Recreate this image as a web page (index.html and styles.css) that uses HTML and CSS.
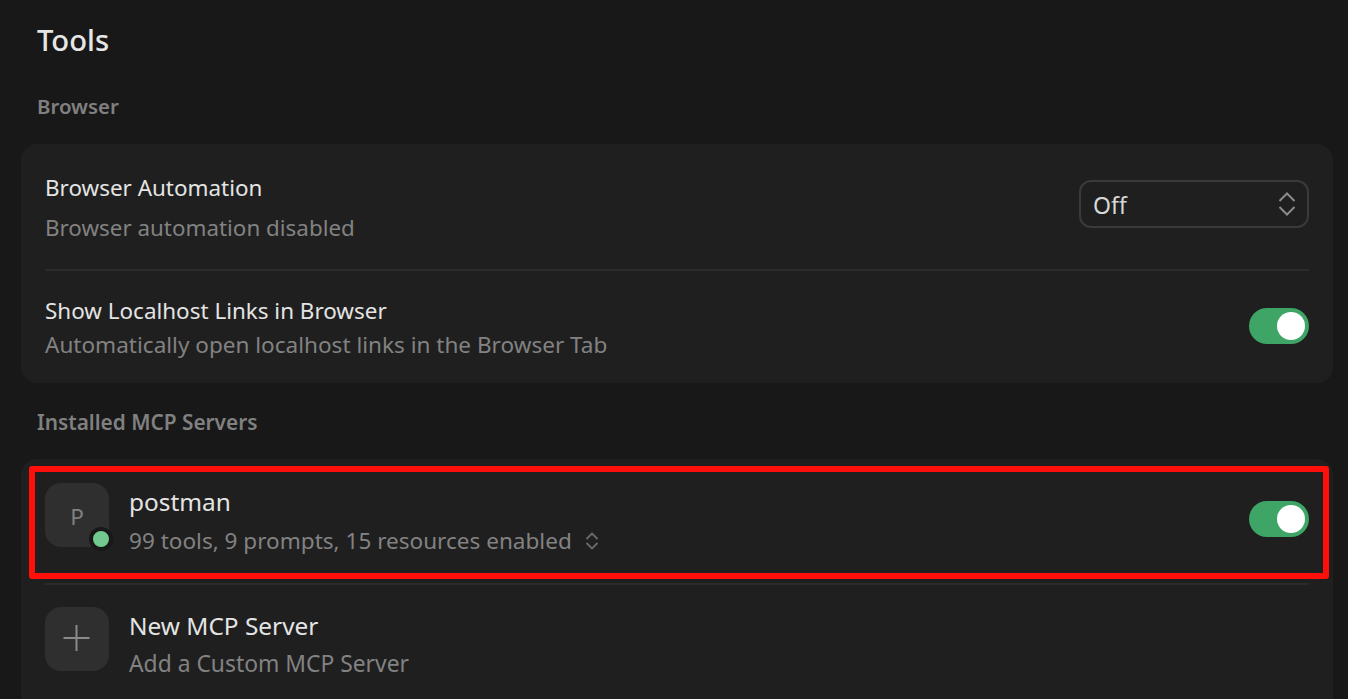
FILE: index.html
```html
<!DOCTYPE html>
<html lang="en">
<head>
<meta charset="utf-8">
<title>Tools</title>
<link rel="stylesheet" href="styles.css">
</head>
<body>
<main class="page">
  <h1 class="title">Tools</h1>
  <h2 class="section section-browser">Browser</h2>
  <section class="card card-browser">
    <div class="row row-auto">
      <div class="text text-shift">
        <div class="name">Browser Automation</div>
        <div class="desc desc-auto">Browser automation disabled</div>
      </div>
      <div class="select">
        <span class="select-value">Off</span>
        <svg class="updown" width="20" height="26" viewBox="0 0 20 26" fill="none"><path d="M2.500 10 10 2.500 17.500 10M2.500 16 10 23.500 17.500 16" stroke="#8a8a8a" stroke-width="2"/></svg>
      </div>
    </div>
    <div class="row row-local">
      <div class="text text-shift">
        <div class="name">Show Localhost Links in Browser</div>
        <div class="desc desc-tight">Automatically open localhost links in the Browser Tab</div>
      </div>
      <div class="toggle toggle-local"><span class="knob"></span></div>
    </div>
  </section>
  <h2 class="section section-mcp">Installed MCP Servers</h2>
  <section class="card card-mcp">
    <div class="row row-server">
      <div class="avatar avatar-server"><span class="initial">P</span><span class="status"></span></div>
      <div class="text">
        <div class="name name-mcp">postman</div>
        <div class="desc desc-server">99 tools, 9 prompts, 15 resources enabled
          <svg width="14" height="18" viewBox="0 0 14 18" fill="none"><path d="M1.500 7 7 1.500 12.500 7M1.500 11 7 16.500 12.500 11" stroke="#6a6a6a" stroke-width="1.800"/></svg>
        </div>
      </div>
      <div class="toggle toggle-server"><span class="knob"></span></div>
      <div class="highlight"></div>
    </div>
    <div class="row row-new">
      <div class="avatar">
        <svg width="28" height="28" viewBox="0 0 28 28" fill="none"><path d="M13.500 0V26M.5 13H26.500" stroke="#8a8a8a" stroke-width="2"/></svg>
      </div>
      <div class="text text-new">
        <div class="name name-mcp">New MCP Server</div>
        <div class="desc desc-new">Add a Custom MCP Server</div>
      </div>
    </div>
  </section>
</main>
</body>
</html>
```
FILE: styles.css
```css
* { box-sizing: border-box; }
html, body { margin: 0; height: 100%; overflow: hidden; }
body {
  background: #181818;
  color: #e4e4e4;
  font-family: "Noto Sans", "Open Sans", sans-serif;
}
.page { padding: 0 15px 0 21px; }
.title {
  margin: 0;
  padding: 20px 0 1px 16px;
  font-size: 29.2px;
  line-height: 40px;
  font-weight: 500;
  color: #e6e6e6;
}
.section {
  margin: 0;
  padding-left: 16px;
  font-size: 20.6px;
  line-height: 28px;
  font-weight: 600;
  color: #808080;
}
.section-browser { padding-top: 31px; height: 83px; font-size: 20.4px; }
.section-mcp { padding-top: 25px; height: 76px; font-size: 20.8px; }
.card {
  background: #1f1f1f;
  border-radius: 16px;
  padding: 0 24px;
}
.card-mcp { height: 260px; }
.row {
  display: flex;
  align-items: center;
  position: relative;
}
.row-auto { height: 127px; border-bottom: 2px solid #2b2b2b; }
.row-local { height: 112px; }
.row-server { height: 126px; border-bottom: 2px solid #2b2b2b; }
.row-new { height: 108px; padding-top: 22px; align-items: flex-start; }
.text { flex: 1; min-width: 0; }
.text-shift { padding-top: 2px; }
.row-server .text, .row-new .text { margin-left: 20px; }
.text-new { padding-top: 3px; }
.name { font-size: 22.45px; line-height: 32px; color: #e4e4e4; }
.name-mcp { font-size: 24.4px; }
.desc { font-size: 22.4px; line-height: 32px; color: #828282; }
.desc-auto { margin-top: 8px; }
.desc-tight { margin-top: 2px; font-size: 22.55px; }
.desc-server { margin-top: 7px; display: flex; align-items: center; gap: 13px; font-size: 22.55px; }
.desc-new { margin-top: 6px; font-size: 22.85px; }
.select {
  width: 230px;
  height: 48px;
  margin-bottom: 5px;
  border: 2px solid #3a3a3a;
  border-radius: 12px;
  padding: 0 10px 0 12px;
  display: flex;
  align-items: center;
  justify-content: space-between;
  font-size: 23px;
  color: #d8d8d8;
}
.select-value { padding-top: 2px; }
.toggle {
  width: 60px;
  height: 36px;
  border-radius: 18px;
  background: #3fa566;
  padding: 4px 4px 4px 28px;
  flex: none;
}
.toggle-local { margin-bottom: 2px; }
.toggle-server { margin-bottom: 4px; }
.knob { display: block; width: 28px; height: 28px; border-radius: 50%; background: #fff; }
.avatar {
  width: 64px;
  height: 64px;
  flex: none;
  border-radius: 16px;
  background: #2f2f2f;
  color: #808080;
  font-size: 22.5px;
  position: relative;
  display: flex;
  align-items: center;
  justify-content: center;
}
.avatar-server { align-self: flex-start; margin-top: 24px; }
.initial { padding-top: 2px; }
.status {
  position: absolute;
  right: -4px;
  bottom: -4px;
  width: 24px;
  height: 24px;
  border-radius: 50%;
  background: #72c98f;
  border: 4px solid #181818;
}
.highlight {
  position: absolute;
  left: -16px;
  right: -20px;
  top: 7px;
  height: 113px;
  border: 6px solid #fe0f0a;
  border-radius: 3px;
  pointer-events: none;
}
```
